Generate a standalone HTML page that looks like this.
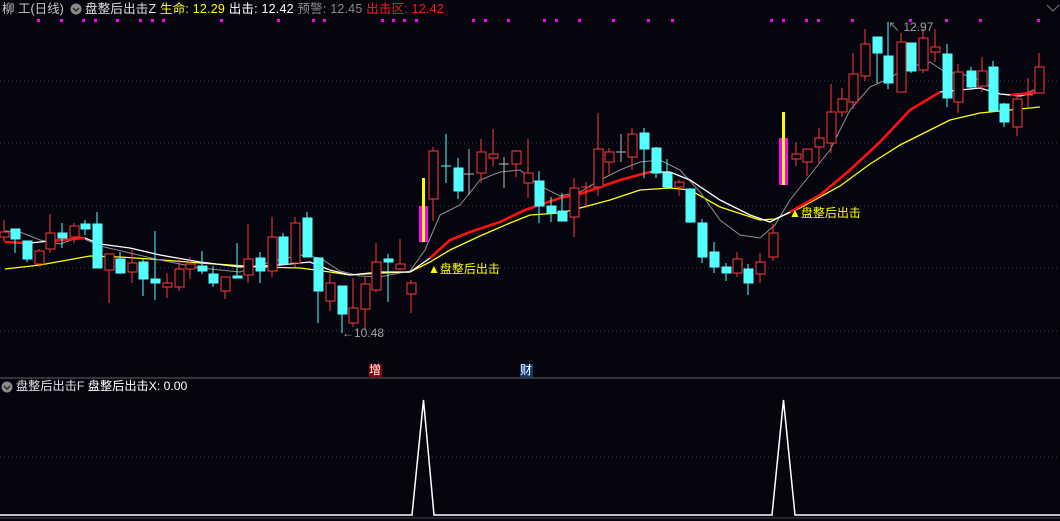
<!DOCTYPE html>
<html><head><meta charset="utf-8"><style>
html,body{margin:0;padding:0;background:#05050f;}
body{width:1060px;height:521px;overflow:hidden;position:relative;font-family:"Liberation Sans","Noto Sans CJK SC",sans-serif;}
.t{position:absolute;font-size:12px;white-space:nowrap;line-height:14px;}
</style></head><body>
<svg width="1060" height="521" style="position:absolute;left:0;top:0" xmlns="http://www.w3.org/2000/svg">
<g stroke="#3a3a44" stroke-dasharray="1,3">
<line x1="0" y1="81" x2="1060" y2="81"/><line x1="0" y1="143" x2="1060" y2="143"/><line x1="0" y1="206" x2="1060" y2="206"/><line x1="0" y1="268" x2="1060" y2="268"/><line x1="0" y1="331" x2="1060" y2="331"/><line x1="0" y1="457" x2="1060" y2="457"/>
</g>
<line x1="0" y1="378" x2="1060" y2="378" stroke="#444" stroke-width="1.5"/>
<line x1="0" y1="518" x2="1060" y2="518" stroke="#444" stroke-width="1"/>
<g fill="#ff00ff">
<rect x="37" y="19" width="3" height="3"/><rect x="60" y="19" width="3" height="3"/><rect x="82" y="19" width="3" height="3"/><rect x="94" y="19" width="3" height="3"/><rect x="116" y="19" width="3" height="3"/><rect x="139" y="19" width="3" height="3"/><rect x="151" y="19" width="3" height="3"/><rect x="162" y="19" width="3" height="3"/><rect x="220" y="19" width="3" height="3"/><rect x="277" y="19" width="3" height="3"/><rect x="312" y="19" width="3" height="3"/><rect x="323" y="19" width="3" height="3"/><rect x="381" y="19" width="3" height="3"/><rect x="392" y="19" width="3" height="3"/><rect x="403" y="19" width="3" height="3"/><rect x="415" y="19" width="3" height="3"/><rect x="472" y="19" width="3" height="3"/><rect x="484" y="19" width="3" height="3"/><rect x="507" y="19" width="3" height="3"/><rect x="543" y="19" width="3" height="3"/><rect x="555" y="19" width="3" height="3"/><rect x="578" y="19" width="3" height="3"/><rect x="612" y="19" width="3" height="3"/><rect x="647" y="19" width="3" height="3"/><rect x="671" y="19" width="3" height="3"/><rect x="770" y="19" width="3" height="3"/><rect x="782" y="19" width="3" height="3"/><rect x="805" y="19" width="3" height="3"/><rect x="817" y="19" width="3" height="3"/><rect x="851" y="19" width="3" height="3"/><rect x="909" y="19" width="3" height="3"/><rect x="945" y="19" width="3" height="3"/><rect x="979" y="19" width="3" height="3"/><rect x="1037" y="19" width="3" height="3"/>
</g>
<polyline fill="none" stroke="#777" stroke-width="1" points="1047,5 1053,11 1059,5"/>
<polyline fill="none" stroke="#ffff00" stroke-width="1.3" points="5,269 40,265 90,256 120,257 150,259 200,263 260,267 300,268 330,272 350,275 380,273 410,272 430,262 450,250 480,236 510,223 530,215 560,213 580,208 610,200 640,190 670,188 690,190 720,207 760,220 775,219 800,208 840,186 870,164 900,145 930,130 950,120 980,113 1010,110 1040,107"/>
<polyline fill="none" stroke="#909090" stroke-width="1" points="5,231 20,232 40,240 60,244 80,237 100,246 130,253 160,260 200,268 240,272 270,262 300,255 320,258 340,271 360,276 380,277 410,271 425,250 440,215 460,205 480,180 500,172 520,170 540,186 560,196 580,192 600,180 620,170 640,162 660,160 680,170 700,192 720,220 740,235 760,238 775,225 790,200 810,175 830,150 850,110 870,87 890,78 905,68 930,62 945,72 965,75 980,80 1000,94 1020,95 1040,88"/>
<polyline fill="none" stroke="#ffffff" stroke-width="1.3" points="5,242 30,243 60,240 85,238 100,244 130,248 160,255 200,262 240,267 280,265 310,262 330,270 350,275 380,272 410,272 430,258 450,240 470,232 500,222 525,210 560,198 580,194 620,180 650,172 670,172 690,180 720,200 750,215 770,222 790,212 820,195 850,170 880,142 910,110 930,98 940,92 960,90 980,88 1000,94 1020,96 1040,92"/>
<g fill="none" stroke="#ff1010" stroke-width="2.6">
<polyline points="5,242 25,243"/><polyline points="50,241 85,238"/>
<polyline points="430,258 450,240 470,232 500,222 525,210 560,198 580,194 620,180 650,172"/>
<polyline points="790,212 820,195 850,170 880,142 910,110 940,92"/>
<polyline points="1010,95 1040,92"/>
</g>
<rect x="419" y="206" width="9" height="36" fill="#ff00ff"/><rect x="422" y="178" width="3" height="64" fill="#ffff00"/>
<rect x="779" y="138" width="9" height="47" fill="#ff00ff"/><rect x="782" y="112" width="3" height="73" fill="#ffff00"/>
<g stroke-width="1">
<g stroke="#ff3838" fill="#05050f">
<line x1="4" y1="220" x2="4" y2="242"/><rect x="0" y="232" width="9" height="5"/>
<line x1="39" y1="249" x2="39" y2="267"/><rect x="35" y="251" width="9" height="13"/>
<line x1="50" y1="214" x2="50" y2="253"/><rect x="46" y="233" width="9" height="16"/>
<line x1="74" y1="223" x2="74" y2="243"/><rect x="70" y="226" width="9" height="11"/>
<line x1="109" y1="254" x2="109" y2="303"/><rect x="105" y="254" width="9" height="16"/>
<line x1="132" y1="250" x2="132" y2="283"/><rect x="128" y="263" width="9" height="9"/>
<line x1="167" y1="273" x2="167" y2="298"/><rect x="163" y="283" width="9" height="4"/>
<line x1="179" y1="257" x2="179" y2="291"/><rect x="175" y="269" width="9" height="18"/>
<line x1="190" y1="257" x2="190" y2="279"/><rect x="186" y="264" width="9" height="5"/>
<line x1="225" y1="277" x2="225" y2="299"/><rect x="221" y="277" width="9" height="14"/>
<line x1="248" y1="224" x2="248" y2="283"/><rect x="244" y="259" width="9" height="16"/>
<line x1="272" y1="217" x2="272" y2="277"/><rect x="268" y="237" width="9" height="34"/>
<line x1="295" y1="217" x2="295" y2="267"/><rect x="291" y="223" width="9" height="40"/>
<line x1="330" y1="274" x2="330" y2="311"/><rect x="326" y="283" width="9" height="18"/>
<line x1="353" y1="278" x2="353" y2="327"/><rect x="349" y="308" width="9" height="15"/>
<line x1="365" y1="277" x2="365" y2="330"/><rect x="361" y="284" width="9" height="25"/>
<line x1="376" y1="243" x2="376" y2="292"/><rect x="372" y="262" width="9" height="28"/>
<line x1="400" y1="239" x2="400" y2="270"/><rect x="396" y="264" width="9" height="5"/>
<line x1="411" y1="280" x2="411" y2="313"/><rect x="407" y="283" width="9" height="11"/>
<line x1="433" y1="147" x2="433" y2="221"/><rect x="429" y="151" width="9" height="48"/>
<line x1="481" y1="139" x2="481" y2="183"/><rect x="477" y="152" width="9" height="21"/>
<line x1="493" y1="129" x2="493" y2="166"/><rect x="489" y="154" width="9" height="4"/>
<line x1="516" y1="150" x2="516" y2="177"/><rect x="512" y="151" width="9" height="13"/>
<line x1="528" y1="139" x2="528" y2="198"/><rect x="524" y="173" width="9" height="10"/>
<line x1="574" y1="178" x2="574" y2="237"/><rect x="570" y="188" width="9" height="29"/>
<line x1="586" y1="182" x2="586" y2="208"/><line x1="581" y1="187" x2="591" y2="187"/>
<line x1="598" y1="113" x2="598" y2="196"/><rect x="594" y="149" width="9" height="38"/>
<line x1="609" y1="148" x2="609" y2="174"/><rect x="605" y="152" width="9" height="10"/>
<line x1="632" y1="128" x2="632" y2="170"/><rect x="628" y="134" width="9" height="23"/>
<line x1="679" y1="180" x2="679" y2="196"/><rect x="675" y="182" width="9" height="5"/>
<line x1="737" y1="252" x2="737" y2="277"/><rect x="733" y="259" width="9" height="14"/>
<line x1="760" y1="253" x2="760" y2="283"/><rect x="756" y="262" width="9" height="12"/>
<line x1="773" y1="224" x2="773" y2="261"/><rect x="769" y="233" width="9" height="24"/>
<line x1="796" y1="142" x2="796" y2="166"/><rect x="792" y="154" width="9" height="5"/>
<line x1="807" y1="149" x2="807" y2="176"/><rect x="803" y="149" width="9" height="13"/>
<line x1="819" y1="128" x2="819" y2="164"/><rect x="815" y="138" width="9" height="9"/>
<line x1="831" y1="84" x2="831" y2="153"/><rect x="827" y="112" width="9" height="31"/>
<line x1="842" y1="88" x2="842" y2="117"/><rect x="838" y="99" width="9" height="13"/>
<line x1="853" y1="53" x2="853" y2="109"/><rect x="849" y="74" width="9" height="28"/>
<line x1="865" y1="29" x2="865" y2="81"/><rect x="861" y="44" width="9" height="32"/>
<line x1="901" y1="33" x2="901" y2="92"/><rect x="897" y="42" width="9" height="50"/>
<line x1="923" y1="29" x2="923" y2="73"/><rect x="919" y="38" width="9" height="32"/>
<line x1="935" y1="29" x2="935" y2="62"/><rect x="931" y="47" width="9" height="5"/>
<line x1="958" y1="64" x2="958" y2="113"/><rect x="954" y="72" width="9" height="30"/>
<line x1="982" y1="57" x2="982" y2="92"/><rect x="978" y="71" width="9" height="15"/>
<line x1="1017" y1="96" x2="1017" y2="136"/><rect x="1013" y="99" width="9" height="28"/>
<line x1="1028" y1="78" x2="1028" y2="107"/><line x1="1023" y1="95" x2="1033" y2="95"/>
<line x1="1039" y1="53" x2="1039" y2="93"/><rect x="1035" y="67" width="9" height="26"/>
</g>
<g stroke="#54ffff" fill="#54ffff">
<line x1="15" y1="229" x2="15" y2="253"/><rect x="11" y="229" width="9" height="10"/>
<line x1="27" y1="241" x2="27" y2="262"/><rect x="23" y="241" width="9" height="18"/>
<line x1="62" y1="223" x2="62" y2="248"/><rect x="58" y="233" width="9" height="5"/>
<line x1="85" y1="220" x2="85" y2="235"/><rect x="81" y="224" width="9" height="5"/>
<line x1="97" y1="212" x2="97" y2="268"/><rect x="93" y="224" width="9" height="44"/>
<line x1="120" y1="252" x2="120" y2="274"/><rect x="116" y="259" width="9" height="14"/>
<line x1="143" y1="259" x2="143" y2="296"/><rect x="139" y="262" width="9" height="17"/>
<line x1="155" y1="231" x2="155" y2="300"/><rect x="151" y="279" width="9" height="4"/>
<line x1="202" y1="251" x2="202" y2="274"/><rect x="198" y="266" width="9" height="5"/>
<line x1="213" y1="266" x2="213" y2="287"/><rect x="209" y="274" width="9" height="9"/>
<line x1="237" y1="243" x2="237" y2="278"/><rect x="233" y="276" width="9" height="2"/>
<line x1="260" y1="252" x2="260" y2="283"/><rect x="256" y="258" width="9" height="13"/>
<line x1="283" y1="233" x2="283" y2="264"/><rect x="279" y="237" width="9" height="27"/>
<line x1="307" y1="212" x2="307" y2="257"/><rect x="303" y="218" width="9" height="39"/>
<line x1="318" y1="258" x2="318" y2="323"/><rect x="314" y="258" width="9" height="33"/>
<line x1="342" y1="286" x2="342" y2="333"/><rect x="338" y="286" width="9" height="28"/>
<line x1="388" y1="254" x2="388" y2="302"/><rect x="384" y="259" width="9" height="3"/>
<line x1="446" y1="134" x2="446" y2="183"/><line x1="441" y1="166" x2="451" y2="166"/>
<line x1="458" y1="158" x2="458" y2="199"/><rect x="454" y="168" width="9" height="23"/>
<line x1="539" y1="171" x2="539" y2="223"/><rect x="535" y="181" width="9" height="25"/>
<line x1="551" y1="197" x2="551" y2="222"/><rect x="547" y="206" width="9" height="7"/>
<line x1="562" y1="193" x2="562" y2="221"/><rect x="558" y="211" width="9" height="10"/>
<line x1="644" y1="128" x2="644" y2="178"/><rect x="640" y="133" width="9" height="16"/>
<line x1="656" y1="147" x2="656" y2="178"/><rect x="652" y="148" width="9" height="25"/>
<line x1="667" y1="159" x2="667" y2="188"/><rect x="663" y="173" width="9" height="14"/>
<line x1="690" y1="188" x2="690" y2="223"/><rect x="686" y="189" width="9" height="33"/>
<line x1="702" y1="219" x2="702" y2="263"/><rect x="698" y="223" width="9" height="34"/>
<line x1="714" y1="242" x2="714" y2="273"/><rect x="710" y="252" width="9" height="15"/>
<line x1="726" y1="263" x2="726" y2="281"/><rect x="722" y="267" width="9" height="6"/>
<line x1="748" y1="264" x2="748" y2="295"/><rect x="744" y="269" width="9" height="14"/>
<line x1="877" y1="37" x2="877" y2="83"/><rect x="873" y="37" width="9" height="16"/>
<line x1="888" y1="22" x2="888" y2="89"/><rect x="884" y="56" width="9" height="27"/>
<line x1="911" y1="43" x2="911" y2="73"/><rect x="907" y="43" width="9" height="28"/>
<line x1="947" y1="44" x2="947" y2="107"/><rect x="943" y="54" width="9" height="44"/>
<line x1="971" y1="67" x2="971" y2="90"/><rect x="967" y="71" width="9" height="16"/>
<line x1="993" y1="61" x2="993" y2="112"/><rect x="989" y="67" width="9" height="44"/>
<line x1="1004" y1="103" x2="1004" y2="127"/><rect x="1000" y="104" width="9" height="18"/>
</g>
<g stroke="#bbbbbb">
<line x1="469" y1="149" x2="469" y2="195"/><line x1="464" y1="174" x2="474" y2="174"/>
<line x1="504" y1="157" x2="504" y2="188"/><line x1="499" y1="164" x2="509" y2="164"/>
<line x1="621" y1="134" x2="621" y2="162"/><line x1="616" y1="152" x2="626" y2="152"/>
</g>
</g>
<polyline fill="none" stroke="#ffffff" stroke-width="1.5" points="0,515 412,515 423.5,400 434,515 772,515 783.5,400 795,515 1060,515"/>
<rect x="369" y="364" width="13" height="13" fill="#8a0000"/>
<rect x="520" y="364" width="13" height="13" fill="#0f3a6e"/>
<circle cx="76" cy="9" r="5.5" fill="#8a8a8a"/><polyline points="73,8 76,11 79,8" fill="none" stroke="#222" stroke-width="1.3"/>
<circle cx="7" cy="387" r="5.5" fill="#8a8a8a"/><polyline points="4,386 7,389 10,386" fill="none" stroke="#222" stroke-width="1.3"/>
</svg>
<div class="t" style="left:2px;top:2px;color:#c8c8c8;font-size:12.5px">柳 工(日线)</div>
<div class="t" style="left:85px;top:2px;color:#e0e0e0;font-size:12.5px;letter-spacing:0.2px">盘整后出击Z <span style="color:#ffff00">生命: 12.29</span> <span style="color:#ffffff">出击: 12.42</span> <span style="color:#8a8a8a">预警: 12.45</span> <span style="color:#ff1a1a">出击区: 12.42</span></div>
<div class="t" style="left:16px;top:379px;color:#e0e0e0;font-size:12.2px">盘整后出击F <span style="color:#ffffff">盘整后出击X: 0.00</span></div>
<div class="t" style="left:342px;top:326px;color:#a0a0a0">←10.48</div>
<div class="t" style="left:888px;top:20px;color:#a0a0a0">↖ 12.97</div>
<div class="t" style="left:428px;top:262px;color:#ffff00">▲盘整后出击</div>
<div class="t" style="left:789px;top:206px;color:#ffff00">▲盘整后出击</div>
<div class="t" style="left:369px;top:363px;color:#fff;font-size:12px">增</div>
<div class="t" style="left:520px;top:363px;color:#fff;font-size:12px">财</div>
</body></html>
